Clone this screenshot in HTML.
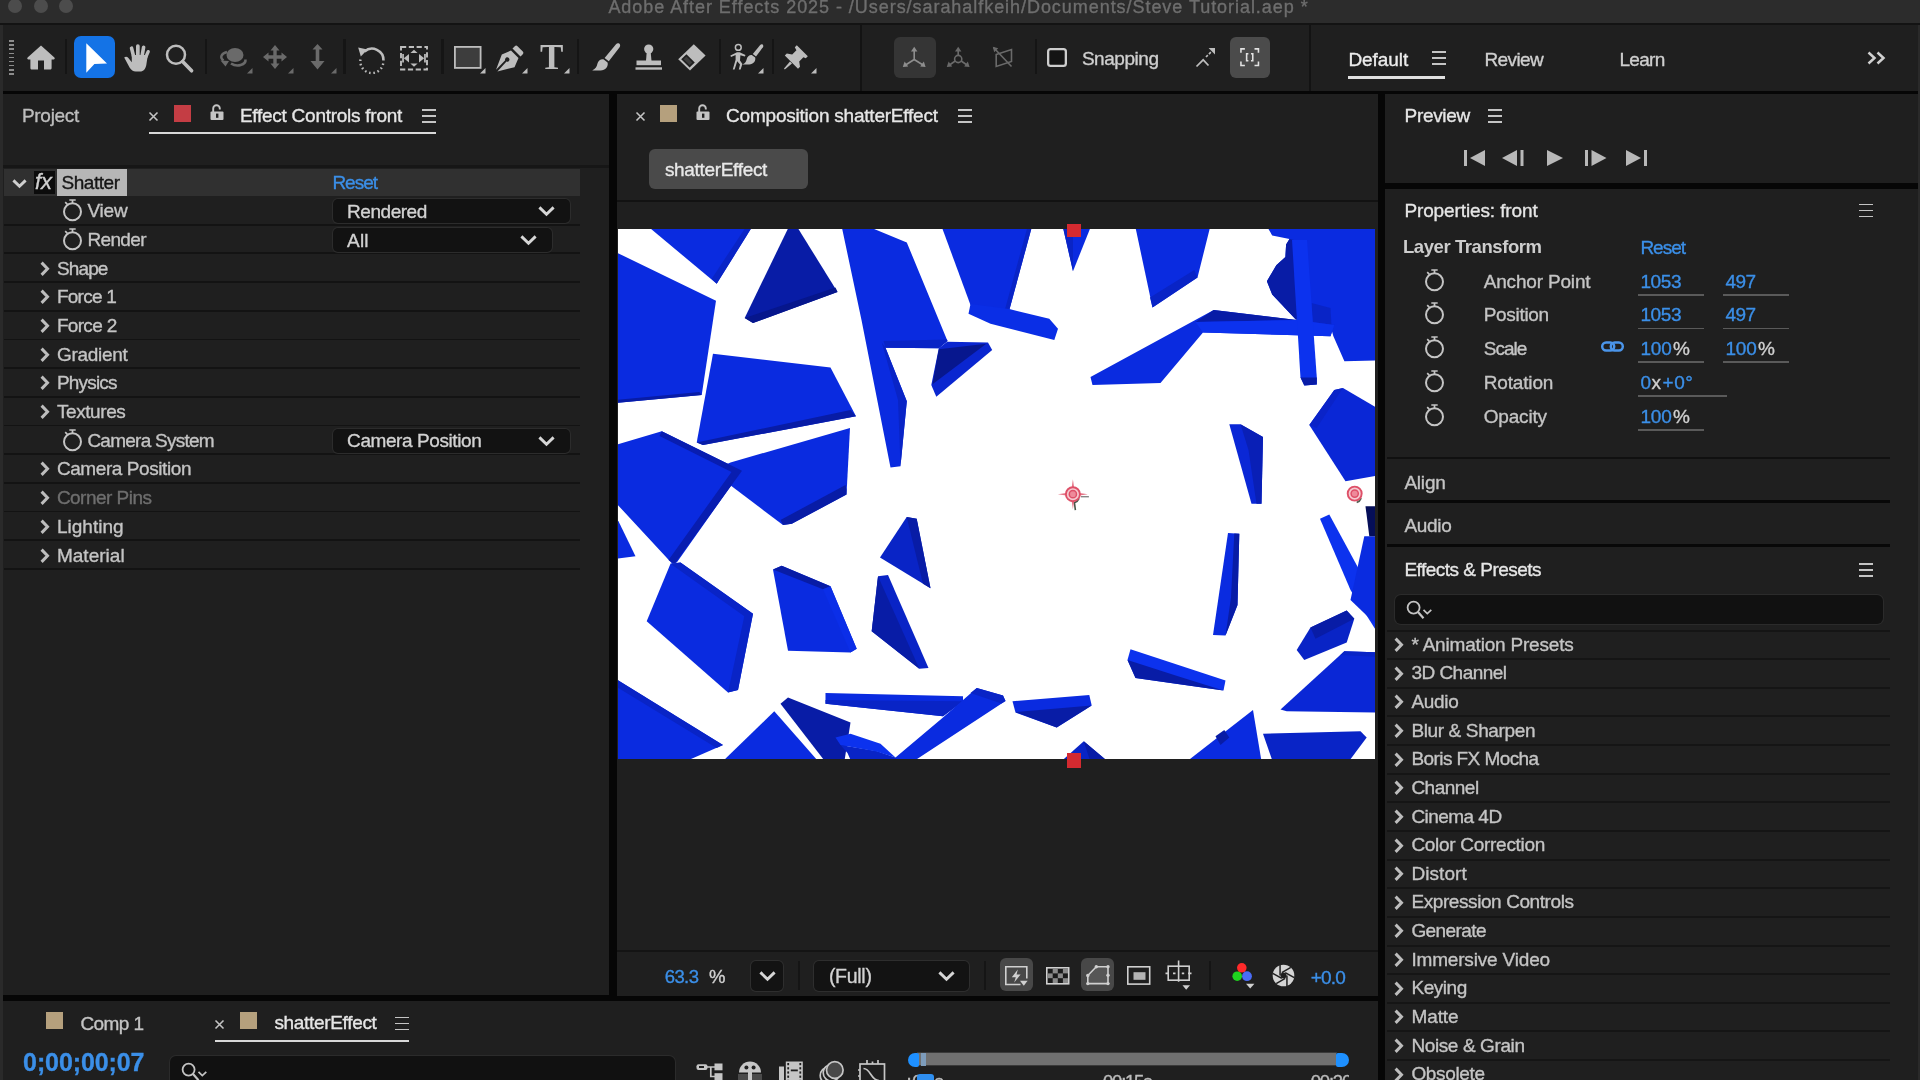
<!DOCTYPE html>
<html><head><meta charset="utf-8"><title>Adobe After Effects 2025</title>
<style>
html,body{margin:0;padding:0;background:#1f1f1f;}
body{width:1920px;height:1080px;overflow:hidden;position:relative;font-family:"Liberation Sans",sans-serif;}
#app{position:absolute;left:0;top:0;width:1920px;height:1080px;overflow:hidden;will-change:transform;}
#app div,#app span,#app svg{position:absolute;}
#app svg{overflow:visible;}
.t{white-space:pre;display:block;-webkit-text-stroke:0.35px currentColor;}
</style></head><body><div id="app">
<div style="left:0px;top:0px;width:1920px;height:1080px;background:#060606;"></div>
<div style="left:0px;top:0px;width:1920px;height:22.6px;background:#2c2c2c;"></div>
<div style="left:0px;top:22.6px;width:1920px;height:2.6px;background:#131313;"></div>
<div style="left:8px;top:0px;width:14px;height:14px;background:#4c4c4c;border-radius:7px;top:-1px"></div>
<div style="left:34px;top:0px;width:14px;height:14px;background:#4c4c4c;border-radius:7px;top:-1px"></div>
<div style="left:59px;top:0px;width:14px;height:14px;background:#4c4c4c;border-radius:7px;top:-1px"></div>
<span class="t" id="t0" style="left:608.40px;top:-2.00px;font-size:18px;line-height:18px;color:#6e6e6e;font-weight:400;letter-spacing:0.951px;">Adobe After Effects 2025 - /Users/sarahalfkeih/Documents/Steve Tutorial.aep *</span>
<div style="left:0px;top:25px;width:1920px;height:65.5px;background:#1f1f1f;"></div>
<div style="left:0px;top:25px;width:2.5px;height:1055px;background:#2a2a2a;"></div>
<div style="left:1918px;top:25px;width:2px;height:1055px;background:#2a2a2a;"></div>
<div style="left:3px;top:94px;width:606px;height:901.2px;background:#1f1f1f;"></div>
<div style="left:616.5px;top:94px;width:761.3px;height:901.8px;background:#1f1f1f;"></div>
<div style="left:1385px;top:94px;width:533px;height:88.5px;background:#1f1f1f;"></div>
<div style="left:1385px;top:189px;width:533px;height:891px;background:#1f1f1f;"></div>
<div style="left:3px;top:1001.3px;width:1374.8px;height:80px;background:#1f1f1f;"></div>
<span class="t" id="t1" style="left:21.90px;top:106.10px;font-size:19px;line-height:19px;color:#bdbdbd;font-weight:400;letter-spacing:-0.277px;">Project</span>
<svg style="left:149px;top:111.8px;" width="9" height="9" viewBox="0 0 9 9"><path d="M0.5 0.5L8.5 8.5M8.5 0.5L0.5 8.5" stroke="#c4c4c4" stroke-width="1.6" fill="none"/></svg>
<div style="left:173.5px;top:105px;width:17.5px;height:16.5px;background:#c43d44;"></div>
<svg style="left:210px;top:104.3px;" width="14" height="16" viewBox="0 0 14 16"><path d="M3.2 8V4.6a3.3 3.3 0 0 1 6.6 0V5.4" stroke="#c4c4c4" stroke-width="1.9" fill="none"/><rect x="0.5" y="7.4" width="13" height="8.6" rx="1" fill="#c4c4c4"/><rect x="6" y="9.6" width="2.4" height="4.2" fill="#1f1f1f"/></svg>
<span class="t" id="t2" style="left:239.90px;top:106.10px;font-size:19px;line-height:19px;color:#e6e6e6;font-weight:400;letter-spacing:-0.256px;">Effect Controls front</span>
<div style="left:422px;top:109.25px;width:14px;height:1.5px;background:#c4c4c4;"></div>
<div style="left:422px;top:115.25px;width:14px;height:1.5px;background:#c4c4c4;"></div>
<div style="left:422px;top:121.25px;width:14px;height:1.5px;background:#c4c4c4;"></div>
<div style="left:149px;top:131.7px;width:287px;height:2px;background:#d8d8d8;"></div>
<div style="left:3px;top:165.3px;width:606px;height:2.4px;background:#161616;"></div>
<div style="left:4px;top:168.6px;width:575.5px;height:27.490000000000002px;background:#303030;"></div>
<div style="left:4px;top:223.78px;width:576px;height:1.8px;background:#131313;"></div>
<div style="left:4px;top:252.47px;width:576px;height:1.8px;background:#131313;"></div>
<div style="left:4px;top:281.15999999999997px;width:576px;height:1.8px;background:#131313;"></div>
<div style="left:4px;top:309.85px;width:576px;height:1.8px;background:#131313;"></div>
<div style="left:4px;top:338.53999999999996px;width:576px;height:1.8px;background:#131313;"></div>
<div style="left:4px;top:367.23px;width:576px;height:1.8px;background:#131313;"></div>
<div style="left:4px;top:395.91999999999996px;width:576px;height:1.8px;background:#131313;"></div>
<div style="left:4px;top:424.61px;width:576px;height:1.8px;background:#131313;"></div>
<div style="left:4px;top:453.3px;width:576px;height:1.8px;background:#131313;"></div>
<div style="left:4px;top:481.99px;width:576px;height:1.8px;background:#131313;"></div>
<div style="left:4px;top:510.67999999999995px;width:576px;height:1.8px;background:#131313;"></div>
<div style="left:4px;top:539.37px;width:576px;height:1.8px;background:#131313;"></div>
<div style="left:4px;top:568.0600000000001px;width:576px;height:1.8px;background:#131313;"></div>
<svg style="left:12.0px;top:178.5px;" width="15" height="9" viewBox="0 0 15 9"><path d="M1.4 1.4L7.5 7.2L13.6 1.4" stroke="#cfcfcf" stroke-width="2.9" fill="none"/></svg>
<div style="left:34px;top:170.5px;width:20.5px;height:23.5px;background:#0c0c0c;"></div>
<span class="t" id="t3" style="left:34.90px;top:171.40px;font-size:22px;line-height:22px;color:#d0d0d0;font-weight:400;letter-spacing:0.042px;font-style:italic;">fx</span>
<div style="left:57px;top:168.6px;width:70px;height:27.490000000000002px;background:#b6b6b6;"></div>
<span class="t" id="t4" style="left:61.40px;top:172.80px;font-size:19px;line-height:19px;color:#161616;font-weight:400;letter-spacing:-0.438px;">Shatter</span>
<span class="t" id="t5" style="left:332.40px;top:172.80px;font-size:19px;line-height:19px;color:#3b8fe8;font-weight:400;letter-spacing:-0.988px;">Reset</span>
<svg style="left:62.5px;top:199.135px;" width="19" height="22" viewBox="0 0 19 22"><circle cx="9.5" cy="12.7" r="8.5" stroke="#c4c4c4" stroke-width="2" fill="none"/><path d="M6.3 1H12.7M9.5 1V4M2.2 3.2L4.4 5.4" stroke="#c4c4c4" stroke-width="1.7" fill="none"/></svg>
<span class="t" id="t6" style="left:87.40px;top:201.23px;font-size:19px;line-height:19px;color:#c4c4c4;font-weight:400;letter-spacing:-0.161px;">View</span>
<div style="left:333px;top:199.035px;width:236.5px;height:24px;background:#121212;border-radius:5px;box-shadow:0 0 0 1px #2c2c2c;"></div>
<span class="t" id="t7" style="left:347.10px;top:201.84px;font-size:19px;line-height:19px;color:#d2d2d2;font-weight:400;letter-spacing:-0.469px;">Rendered</span>
<svg style="left:538.3px;top:206.035px;" width="17" height="10" viewBox="0 0 17 10"><path d="M1.4 1.4L8.5 8.2L15.6 1.4" stroke="#d6d6d6" stroke-width="2.9" fill="none"/></svg>
<svg style="left:62.5px;top:227.825px;" width="19" height="22" viewBox="0 0 19 22"><circle cx="9.5" cy="12.7" r="8.5" stroke="#c4c4c4" stroke-width="2" fill="none"/><path d="M6.3 1H12.7M9.5 1V4M2.2 3.2L4.4 5.4" stroke="#c4c4c4" stroke-width="1.7" fill="none"/></svg>
<span class="t" id="t8" style="left:87.40px;top:229.92px;font-size:19px;line-height:19px;color:#c4c4c4;font-weight:400;letter-spacing:-0.638px;">Render</span>
<div style="left:333px;top:227.725px;width:218.5px;height:24px;background:#121212;border-radius:5px;box-shadow:0 0 0 1px #2c2c2c;"></div>
<span class="t" id="t9" style="left:347.10px;top:230.53px;font-size:19px;line-height:19px;color:#d2d2d2;font-weight:400;letter-spacing:0.191px;">All</span>
<svg style="left:520.3px;top:234.725px;" width="17" height="10" viewBox="0 0 17 10"><path d="M1.4 1.4L8.5 8.2L15.6 1.4" stroke="#d6d6d6" stroke-width="2.9" fill="none"/></svg>
<svg style="left:40px;top:260.665px;" width="9.5" height="15.5" viewBox="0 0 9.5 15.5"><path d="M1.6 1.6L7.5 7.75L1.6 13.9" stroke="#bdbdbd" stroke-width="3" fill="none" stroke-linejoin="miter"/></svg>
<span class="t" id="t10" style="left:56.90px;top:258.62px;font-size:19px;line-height:19px;color:#c4c4c4;font-weight:400;letter-spacing:-0.848px;">Shape</span>
<svg style="left:40px;top:289.355px;" width="9.5" height="15.5" viewBox="0 0 9.5 15.5"><path d="M1.6 1.6L7.5 7.75L1.6 13.9" stroke="#bdbdbd" stroke-width="3" fill="none" stroke-linejoin="miter"/></svg>
<span class="t" id="t11" style="left:56.90px;top:287.31px;font-size:19px;line-height:19px;color:#c4c4c4;font-weight:400;letter-spacing:-0.746px;">Force 1</span>
<svg style="left:40px;top:318.0450000000001px;" width="9.5" height="15.5" viewBox="0 0 9.5 15.5"><path d="M1.6 1.6L7.5 7.75L1.6 13.9" stroke="#bdbdbd" stroke-width="3" fill="none" stroke-linejoin="miter"/></svg>
<span class="t" id="t12" style="left:56.90px;top:316.00px;font-size:19px;line-height:19px;color:#c4c4c4;font-weight:400;letter-spacing:-0.674px;">Force 2</span>
<svg style="left:40px;top:346.735px;" width="9.5" height="15.5" viewBox="0 0 9.5 15.5"><path d="M1.6 1.6L7.5 7.75L1.6 13.9" stroke="#bdbdbd" stroke-width="3" fill="none" stroke-linejoin="miter"/></svg>
<span class="t" id="t13" style="left:56.90px;top:344.69px;font-size:19px;line-height:19px;color:#c4c4c4;font-weight:400;letter-spacing:-0.272px;">Gradient</span>
<svg style="left:40px;top:375.42500000000007px;" width="9.5" height="15.5" viewBox="0 0 9.5 15.5"><path d="M1.6 1.6L7.5 7.75L1.6 13.9" stroke="#bdbdbd" stroke-width="3" fill="none" stroke-linejoin="miter"/></svg>
<span class="t" id="t14" style="left:56.90px;top:373.38px;font-size:19px;line-height:19px;color:#c4c4c4;font-weight:400;letter-spacing:-0.796px;">Physics</span>
<svg style="left:40px;top:404.115px;" width="9.5" height="15.5" viewBox="0 0 9.5 15.5"><path d="M1.6 1.6L7.5 7.75L1.6 13.9" stroke="#bdbdbd" stroke-width="3" fill="none" stroke-linejoin="miter"/></svg>
<span class="t" id="t15" style="left:56.90px;top:402.06px;font-size:19px;line-height:19px;color:#c4c4c4;font-weight:400;letter-spacing:-0.414px;">Textures</span>
<svg style="left:62.5px;top:428.65500000000003px;" width="19" height="22" viewBox="0 0 19 22"><circle cx="9.5" cy="12.7" r="8.5" stroke="#c4c4c4" stroke-width="2" fill="none"/><path d="M6.3 1H12.7M9.5 1V4M2.2 3.2L4.4 5.4" stroke="#c4c4c4" stroke-width="1.7" fill="none"/></svg>
<span class="t" id="t16" style="left:87.40px;top:430.76px;font-size:19px;line-height:19px;color:#c4c4c4;font-weight:400;letter-spacing:-0.746px;">Camera System</span>
<div style="left:333px;top:428.55500000000006px;width:236.5px;height:24px;background:#121212;border-radius:5px;box-shadow:0 0 0 1px #2c2c2c;"></div>
<span class="t" id="t17" style="left:347.10px;top:431.36px;font-size:19px;line-height:19px;color:#d2d2d2;font-weight:400;letter-spacing:-0.417px;">Camera Position</span>
<svg style="left:538.3px;top:435.55500000000006px;" width="17" height="10" viewBox="0 0 17 10"><path d="M1.4 1.4L8.5 8.2L15.6 1.4" stroke="#d6d6d6" stroke-width="2.9" fill="none"/></svg>
<svg style="left:40px;top:461.49500000000006px;" width="9.5" height="15.5" viewBox="0 0 9.5 15.5"><path d="M1.6 1.6L7.5 7.75L1.6 13.9" stroke="#bdbdbd" stroke-width="3" fill="none" stroke-linejoin="miter"/></svg>
<span class="t" id="t18" style="left:56.90px;top:459.45px;font-size:19px;line-height:19px;color:#c4c4c4;font-weight:400;letter-spacing:-0.417px;">Camera Position</span>
<svg style="left:40px;top:490.18500000000006px;" width="9.5" height="15.5" viewBox="0 0 9.5 15.5"><path d="M1.6 1.6L7.5 7.75L1.6 13.9" stroke="#bdbdbd" stroke-width="3" fill="none" stroke-linejoin="miter"/></svg>
<span class="t" id="t19" style="left:56.90px;top:488.14px;font-size:19px;line-height:19px;color:#6e6e6e;font-weight:400;letter-spacing:-0.529px;">Corner Pins</span>
<svg style="left:40px;top:518.875px;" width="9.5" height="15.5" viewBox="0 0 9.5 15.5"><path d="M1.6 1.6L7.5 7.75L1.6 13.9" stroke="#bdbdbd" stroke-width="3" fill="none" stroke-linejoin="miter"/></svg>
<span class="t" id="t20" style="left:56.90px;top:516.83px;font-size:19px;line-height:19px;color:#c4c4c4;font-weight:400;letter-spacing:0.017px;">Lighting</span>
<svg style="left:40px;top:547.565px;" width="9.5" height="15.5" viewBox="0 0 9.5 15.5"><path d="M1.6 1.6L7.5 7.75L1.6 13.9" stroke="#bdbdbd" stroke-width="3" fill="none" stroke-linejoin="miter"/></svg>
<span class="t" id="t21" style="left:56.90px;top:545.52px;font-size:19px;line-height:19px;color:#c4c4c4;font-weight:400;letter-spacing:0.027px;">Material</span>
<div style="left:8.5px;top:40.2px;width:5.2px;height:1.7px;background:#8c8c8c;"></div>
<div style="left:8.5px;top:44.300000000000004px;width:5.2px;height:1.7px;background:#8c8c8c;"></div>
<div style="left:8.5px;top:48.400000000000006px;width:5.2px;height:1.7px;background:#8c8c8c;"></div>
<div style="left:8.5px;top:52.5px;width:5.2px;height:1.7px;background:#8c8c8c;"></div>
<div style="left:8.5px;top:56.6px;width:5.2px;height:1.7px;background:#8c8c8c;"></div>
<div style="left:8.5px;top:60.7px;width:5.2px;height:1.7px;background:#8c8c8c;"></div>
<div style="left:8.5px;top:64.8px;width:5.2px;height:1.7px;background:#8c8c8c;"></div>
<div style="left:8.5px;top:68.9px;width:5.2px;height:1.7px;background:#8c8c8c;"></div>
<div style="left:8.5px;top:73.0px;width:5.2px;height:1.7px;background:#8c8c8c;"></div>
<svg style="left:26.5px;top:44.5px;" width="28" height="25" viewBox="0 0 28 25"><path d="M14 0.6L27.4 12.6c.8.8.2 1.9-.8 1.9H24.6V23c0 1-.7 1.6-1.6 1.6H17V15.5H11V24.6H5c-.9 0-1.6-.6-1.6-1.6V14.5H1.4c-1 0-1.6-1.1-.8-1.9Z" fill="#bdbdbd"/></svg>
<div style="left:65.10000000000001px;top:39px;width:2.2px;height:35px;background:#151515;"></div>
<div style="left:74px;top:36.3px;width:41px;height:41.5px;background:#1473e6;border-radius:7px;"></div>
<svg style="left:74px;top:36.3px;" width="41" height="41.5" viewBox="0 0 41 41.5"><path d="M12.3 7.2L33 27.4L20.4 28L12.3 36.8Z" fill="#ffffff"/></svg>
<svg style="left:122.5px;top:43.5px;" width="28" height="28" viewBox="0 0 28 28"><g fill="#bdbdbd"><rect x="8.2" y="2.2" width="3.6" height="15" rx="1.8" transform="rotate(-14 10 10)"/><rect x="13" y="0.2" width="3.7" height="16" rx="1.8"/><rect x="17.8" y="1.4" width="3.6" height="15" rx="1.8" transform="rotate(10 19.6 9)"/><rect x="22" y="5.6" width="3.4" height="12" rx="1.7" transform="rotate(24 23.6 11)"/><path d="M1.2 13.6c1.3-1.4 3-1 4.2.4l3.400 4.200V11h16l-1.500 10c-.6 3.600-2.800 6.600-6.200 6.600h-4.400c-2.600 0-4.400-1.400-6-3.800Z"/></g></svg>
<svg style="left:163.5px;top:42.5px;" width="32" height="32" viewBox="0 0 32 32"><circle cx="12" cy="11.8" r="9" stroke="#bdbdbd" stroke-width="2.5" fill="none"/><path d="M18.6 18.6L27.6 27.8" stroke="#bdbdbd" stroke-width="3.6" stroke-linecap="round"/></svg>
<div style="left:204.5px;top:39px;width:2.2px;height:35px;background:#151515;"></div>
<svg style="left:218px;top:46px;" width="32" height="24" viewBox="0 0 32 24"><ellipse cx="17" cy="9" rx="8.5" ry="7" fill="#6a6a6a"/><path d="M9 6C3 7.5 1.500 11.500 5.500 14.500" stroke="#6a6a6a" stroke-width="2.4" fill="none"/><path d="M2.500 14.500L11 15L7.500 20.500Z" fill="#6a6a6a"/><path d="M13 17.500C19 21.500 28 19 27.500 13.500" stroke="#6a6a6a" stroke-width="2.600" fill="none"/></svg>
<svg style="left:247.0px;top:68.0px;" width="5.5" height="5.5" viewBox="0 0 5.5 5.5"><path d="M5.5 0V5.5H0Z" fill="#6a6a6a"/></svg>
<svg style="left:263px;top:45.4px;" width="24" height="24" viewBox="0 0 24 24"><g fill="#6a6a6a"><path d="M12 0L16.500 5.500H13.700V10.300H18.500V7.500L24 12L18.500 16.500V13.700H13.700V18.500H16.500L12 24L7.500 18.500H10.300V13.700H5.500V16.500L0 12L5.500 7.500V10.300H10.300V5.500H7.500Z"/></g></svg>
<svg style="left:288.0px;top:68.0px;" width="5.5" height="5.5" viewBox="0 0 5.5 5.5"><path d="M5.5 0V5.5H0Z" fill="#6a6a6a"/></svg>
<svg style="left:310px;top:44.3px;" width="15" height="25.5" viewBox="0 0 15 25.5"><g fill="#6a6a6a"><path d="M7.500 0L12.500 5.500H9.300V17H14.500L7.500 25.500L0.500 17H5.700V5.500H2.500Z"/></g></svg>
<svg style="left:330.5px;top:68.0px;" width="5.5" height="5.5" viewBox="0 0 5.5 5.5"><path d="M5.5 0V5.5H0Z" fill="#6a6a6a"/></svg>
<div style="left:342.9px;top:39px;width:3px;height:35px;background:#151515;"></div>
<svg style="left:357px;top:44px;" width="29" height="29" viewBox="0 0 29 29"><path d="M7.500 7.500A11.500 11.500 0 0 1 26.500 16.500" stroke="#bdbdbd" stroke-width="2.600" fill="none"/><path d="M1.200 3.500L10.500 5.500L3.800 12.500Z" fill="#bdbdbd"/><path d="M26.200 19.500A11.500 11.500 0 0 1 3.500 15.500" stroke="#bdbdbd" stroke-width="2.400" fill="none" stroke-dasharray="1.6 2.700"/></svg>
<svg style="left:400px;top:45.5px;" width="28" height="24.5" viewBox="0 0 28 24.5"><rect x="1" y="1" width="26" height="22.500" stroke="#bdbdbd" stroke-width="1.900" fill="none" stroke-dasharray="5.200 2.600"/><g fill="#bdbdbd"><path d="M14 3.800L17.600 7H10.400Z"/><path d="M14 20.700L17.600 17.500H10.400Z"/><path d="M3.800 12.200L9 8V16.500Z"/><rect x="2.200" y="8" width="1.700" height="8.500"/><path d="M24.200 12.200L19 8V16.500Z"/><rect x="24.100" y="8" width="1.700" height="8.500"/></g></svg>
<div style="left:441.4px;top:39px;width:2.2px;height:35px;background:#151515;"></div>
<svg style="left:454px;top:46px;" width="27.5" height="22.8" viewBox="0 0 27.5 22.8"><rect x="0.900" y="0.900" width="25.700" height="21" stroke="#bdbdbd" stroke-width="1.800" fill="#3d3d3d"/></svg>
<svg style="left:480.0px;top:68.0px;" width="5.5" height="5.5" viewBox="0 0 5.5 5.5"><path d="M5.5 0V5.5H0Z" fill="#bdbdbd"/></svg>
<svg style="left:494.5px;top:43.5px;" width="30" height="28" viewBox="0 0 30 28"><g fill="#bdbdbd"><path d="M17.500 4.500L25.500 12.500L27.800 10.200C28.600 9.400 28.600 8.300 27.800 7.500L22.500 2.200C21.700 1.400 20.600 1.400 19.800 2.200Z"/><path d="M16 6.500L23.500 14L19.500 23.200L2.400 27.400L11.500 17.600A2.200 2.200 0 1 0 10.200 16.300L1 25.800L6.800 10.500Z"/></g></svg>
<svg style="left:522.0px;top:68.0px;" width="5.5" height="5.5" viewBox="0 0 5.5 5.5"><path d="M5.5 0V5.5H0Z" fill="#bdbdbd"/></svg>
<span class="t" id="t22" style="left:540.00px;top:39.90px;font-size:35px;line-height:35px;color:#bdbdbd;font-weight:700;letter-spacing:0.000px;font-family:'Liberation Serif',serif;-webkit-text-stroke:0;">T</span>
<svg style="left:564.0px;top:68.0px;" width="5.5" height="5.5" viewBox="0 0 5.5 5.5"><path d="M5.5 0V5.5H0Z" fill="#bdbdbd"/></svg>
<div style="left:576.9px;top:39px;width:2.2px;height:35px;background:#151515;"></div>
<svg style="left:590.5px;top:43.2px;" width="30" height="28" viewBox="0 0 30 28"><g fill="#bdbdbd"><path d="M28.200 0.600C29.400 1.500 29.400 3 28.600 4.200L17.800 18.200L13.600 15L25 1.200C25.900 0.100 27.200 -.1 28.200 .6Z"/><path d="M12.400 16.200L16.600 19.400C17.600 23.200 14.500 27.400 9.500 27.400H1.200C4.800 25.800 5.800 23.500 6.400 20.800C7 18 9.500 15.800 12.400 16.200Z"/></g></svg>
<svg style="left:635px;top:44px;" width="27.5" height="27" viewBox="0 0 27.5 27"><g fill="#bdbdbd"><circle cx="13.700" cy="5" r="4.600"/><path d="M11.700 8H15.700L16.500 17H11Z"/><path d="M1.500 16.500H26V21.200H1.500Z"/><rect x="0.500" y="23.300" width="26.500" height="2.400"/></g></svg>
<svg style="left:676.5px;top:42.8px;" width="30" height="29" viewBox="0 0 30 29"><g><path d="M16.800 1.200L28.600 12.500L13 27.600L1.200 16.300Z" fill="#bdbdbd"/><path d="M4.200 16.300L9.400 11.300L17.800 19.400L12.600 24.400Z" fill="#1f1f1f"/><path d="M6.600 16.300L9.400 13.600L15.400 19.400L12.600 22.100Z" fill="#3a3a3a"/></g></svg>
<div style="left:718.6999999999999px;top:39px;width:2.2px;height:35px;background:#151515;"></div>
<svg style="left:728.5px;top:43.5px;" width="35" height="27" viewBox="0 0 35 27"><g fill="#bdbdbd"><circle cx="9.300" cy="3.400" r="2.900" fill="none" stroke="#bdbdbd" stroke-width="1.500"/><path d="M1.400 11.500L8 8.300H10.600L16.500 11L15.800 12.600L11.400 11.200L11 16.500L13.400 20L11.600 25.500H9.800L11 20.500L8.200 17.200L5.600 25.600H3.800L6.600 15.800V10.900L2 13Z"/><path d="M33.600 0.500C34.500 1.200 34.500 2.300 33.900 3.200L27 12.500L23.800 10L31.200 1C31.900 .2 32.800 0 33.600 .5Z"/><path d="M22.800 11L26.200 13.600C27 17 24.400 20.400 20.200 20.400H13.500C16.300 19.200 17.200 17.400 17.700 15.200C18.200 12.700 20.400 10.700 22.800 11Z"/></g></svg>
<svg style="left:757.5px;top:68.0px;" width="5.5" height="5.5" viewBox="0 0 5.5 5.5"><path d="M5.5 0V5.5H0Z" fill="#bdbdbd"/></svg>
<div style="left:771.9px;top:39px;width:2.2px;height:35px;background:#151515;"></div>
<svg style="left:782.5px;top:43.5px;" width="26" height="26" viewBox="0 0 26 26"><g fill="#bdbdbd"><path d="M13.800 1.200L24.800 12.200L22.800 14.200L20.400 13.200L16.200 17.400L17 22.800L15 24.800L1.800 11.600L3.800 9.600L9.200 10.400L13.400 6.200L11.800 3.200Z" transform="rotate(0)"/><path d="M7 17.500L9 19.500L1.800 25.400L1 24.600Z"/></g></svg>
<svg style="left:811.0px;top:68.0px;" width="5.5" height="5.5" viewBox="0 0 5.5 5.5"><path d="M5.5 0V5.5H0Z" fill="#bdbdbd"/></svg>
<div style="left:859.8px;top:25px;width:2.6px;height:65.5px;background:#131313;"></div>
<div style="left:1308.8px;top:25px;width:2.6px;height:65.5px;background:#131313;"></div>
<div style="left:894.4px;top:37px;width:41.5px;height:41px;background:#353535;border-radius:6px;"></div>
<svg style="left:901px;top:45px;" width="27" height="25" viewBox="0 0 27 25"><g stroke="#8e8e8e" stroke-width="1.600" fill="none"><path d="M13.200 14.500V5M13.200 14.500L4.500 20M13.200 14.500L22 20"/></g><g fill="#8e8e8e"><path d="M13.200 1.800L16.400 6.600H10Z"/><path d="M1.800 22L3.600 16.500L7.200 21.600Z"/><path d="M24.600 22L22.800 16.500L19.200 21.600Z"/></g></svg>
<svg style="left:945px;top:45px;" width="27" height="25" viewBox="0 0 27 25"><g stroke="#6a6a6a" stroke-width="1.600" fill="none"><circle cx="13.200" cy="14" r="3.600"/><path d="M13.200 10.400V5M10.200 16L4.500 20M16.200 16L22 20"/></g><g fill="#6a6a6a"><path d="M13.200 1.800L16.400 6.600H10Z"/><path d="M1.800 22L3.600 16.500L7.200 21.600Z"/><path d="M24.600 22L22.800 16.500L19.200 21.600Z"/></g></svg>
<svg style="left:991.5px;top:45.5px;" width="23" height="23" viewBox="0 0 23 23"><g stroke="#6a6a6a" stroke-width="1.600" fill="none"><path d="M4.200 8.500L19.500 3.500V15.500L4.200 20.500Z"/><path d="M1.500 1.500L19.500 20.500"/></g><path d="M0.800 0.800L6.200 2.200L2.200 6.200Z" fill="#6a6a6a"/></svg>
<div style="left:1034.9px;top:39px;width:2.2px;height:35px;background:#151515;"></div>
<div style="left:1047.2px;top:47.5px;width:19.6px;height:19.6px;background:#141414;border-radius:3.500px;box-shadow:inset 0 0 0 2.300px #cdcdcd;"></div>
<span class="t" id="t23" style="left:1081.90px;top:48.90px;font-size:19px;line-height:19px;color:#cfcfcf;font-weight:400;letter-spacing:-0.450px;">Snapping</span>
<svg style="left:1194.5px;top:47px;" width="21" height="21" viewBox="0 0 21 21"><g stroke="#bdbdbd" stroke-width="1.700" fill="none"><path d="M1.500 19.500L8.200 12.800L13.500 18.500"/><path d="M11 10L17 4" stroke-dasharray="2.600 1.600"/></g><path d="M20 1V7.400L13.600 1Z" fill="#bdbdbd"/></svg>
<div style="left:1229.5px;top:37px;width:40.5px;height:41px;background:#4b4b4b;border-radius:6px;"></div>
<svg style="left:1240.3px;top:48.3px;" width="19.4" height="18.4" viewBox="0 0 22 21"><g stroke="#e2e2e2" stroke-width="1.800" fill="none"><path d="M1 5.500V1H5.500M16.500 1H21V5.500M21 15.500V20H16.500M5.500 20H1V15.500"/><path d="M9.500 6.500H7.500V14.500H9.500M12.500 6.500H14.500V14.500H12.500"/></g></svg>
<span class="t" id="t24" style="left:1348.40px;top:50.10px;font-size:19px;line-height:19px;color:#ececec;font-weight:400;letter-spacing:-0.072px;">Default</span>
<div style="left:1431.5px;top:51.45px;width:14px;height:1.5px;background:#c4c4c4;"></div>
<div style="left:1431.5px;top:57.45px;width:14px;height:1.5px;background:#c4c4c4;"></div>
<div style="left:1431.5px;top:63.45px;width:14px;height:1.5px;background:#c4c4c4;"></div>
<div style="left:1347.5px;top:76.1px;width:97.5px;height:2.6px;background:#e0e0e0;"></div>
<span class="t" id="t25" style="left:1484.40px;top:50.10px;font-size:19px;line-height:19px;color:#cfcfcf;font-weight:400;letter-spacing:-0.600px;">Review</span>
<span class="t" id="t26" style="left:1619.40px;top:50.10px;font-size:19px;line-height:19px;color:#cfcfcf;font-weight:400;letter-spacing:-0.679px;">Learn</span>
<svg style="left:1866.5px;top:50.8px;" width="19" height="14" viewBox="0 0 19 14"><path d="M1.500 1.500L7.500 7L1.500 12.500M10.500 1.500L16.500 7L10.500 12.500" stroke="#d0d0d0" stroke-width="2.500" fill="none"/></svg>
<svg style="left:636px;top:111.8px;" width="9" height="9" viewBox="0 0 9 9"><path d="M0.5 0.5L8.5 8.5M8.5 0.5L0.5 8.5" stroke="#c4c4c4" stroke-width="1.6" fill="none"/></svg>
<div style="left:660px;top:105px;width:17px;height:16.5px;background:#b5a07d;"></div>
<svg style="left:696px;top:104.3px;" width="14" height="16" viewBox="0 0 14 16"><path d="M3.2 8V4.6a3.3 3.3 0 0 1 6.6 0V5.4" stroke="#c4c4c4" stroke-width="1.9" fill="none"/><rect x="0.5" y="7.4" width="13" height="8.6" rx="1" fill="#c4c4c4"/><rect x="6" y="9.6" width="2.4" height="4.2" fill="#1f1f1f"/></svg>
<span class="t" id="t27" style="left:726.10px;top:106.10px;font-size:19px;line-height:19px;color:#e6e6e6;font-weight:400;letter-spacing:-0.221px;">Composition shatterEffect</span>
<div style="left:957.5px;top:109.25px;width:14px;height:1.5px;background:#c4c4c4;"></div>
<div style="left:957.5px;top:115.25px;width:14px;height:1.5px;background:#c4c4c4;"></div>
<div style="left:957.5px;top:121.25px;width:14px;height:1.5px;background:#c4c4c4;"></div>
<div style="left:648.7px;top:148.7px;width:159px;height:40px;background:#4a4a4a;border-radius:6px;"></div>
<span class="t" id="t28" style="left:664.90px;top:160.30px;font-size:19px;line-height:19px;color:#e8e8e8;font-weight:400;letter-spacing:-0.318px;">shatterEffect</span>
<div style="left:616.5px;top:200px;width:761px;height:2.2px;background:#121212;"></div>
<svg style="left:617.5px;top:229px;overflow:hidden" width="757.8" height="530" viewBox="617.5 229 757.8 530"><rect x="617.5" y="229" width="757.8" height="530" fill="#ffffff"/><polygon points="648.8,227.5 751.2,227.5 716.2,283.8" fill="#0a2be0"/>
<polygon points="751.2,227.5 716.2,283.8 711.2,278.8 745.0,227.5" fill="#0924c6"/>
<polygon points="615.0,252.0 715.5,300.8 701.2,395.0 615.0,403.0" fill="#0a2be0"/>
<polygon points="701.2,395.0 615.0,403.0 615.0,400.0 698.8,392.0" fill="#081ca6"/>
<polygon points="788.0,227.5 797.0,227.5 837.0,292.0 752.5,323.0 744.2,318.0" fill="#081ca6"/>
<polygon points="837.0,292.0 752.5,323.0 744.2,318.0 835.0,287.5" fill="#06168c"/>
<polygon points="941.3,227.0 1031.3,227.0 1008.8,310.0 970.0,305.0" fill="#0a2be0"/>
<polygon points="1031.3,227.0 1008.8,310.0 1004.5,309.3 1027.0,227.0" fill="#0924c6"/>
<polygon points="968.0,313.8 970.0,304.0 1008.8,309.0 1048.8,318.8 1057.5,328.8 1053.8,340.0 990.0,323.8" fill="#0a2ee6"/>
<polygon points="841.3,227.0 868.8,227.0 906.3,242.5 947.0,341.0 938.3,348.3 885.0,347.8 906.3,401.3 900.0,466.3 890.0,467.5 861.0,320.0" fill="#0a2be0"/>
<polygon points="885.0,347.8 906.3,401.3 900.0,466.3 897.5,400.0 881.3,342.5" fill="#0924c6"/>
<polygon points="883.0,341.0 946.5,339.5 947.0,341.0 938.3,348.3 885.0,347.8" fill="#0924c6"/>
<polygon points="930.8,385.0 938.3,348.3 946.7,341.7 987.5,342.5 991.7,350.0 935.8,396.7" fill="#0a26d0"/>
<polygon points="938.3,349.2 985.8,343.7 932.0,384.2" fill="#07178e"/>
<polygon points="712.5,353.8 830.0,367.5 855.5,416.2 702.5,445.0 696.2,442.5" fill="#0a2be0"/>
<polygon points="855.5,416.2 702.5,445.0 696.2,442.5 850.0,410.0" fill="#081ca6"/>
<polygon points="849.5,428.0 846.0,494.5 791.3,523.8 782.5,525.0 711.0,471.0 730.0,462.5" fill="#0a2be0"/>
<polygon points="846.0,490.0 846.0,494.5 791.3,523.8 782.5,525.0 780.0,520.0 845.0,485.0" fill="#081ca6"/>
<polygon points="615.0,445.0 661.3,431.3 741.5,470.8 727.5,490.0 676.3,562.5 672.0,564.0 615.0,502.5" fill="#0a2be0"/>
<polygon points="661.3,431.3 741.5,470.8 674.0,564.0 668.0,560.0 731.0,472.0 659.0,436.0" fill="#081db0"/>
<polygon points="1062.5,227.5 1090.0,227.5 1072.5,271.2" fill="#0a2be0"/>
<polygon points="1062.5,227.5 1072.5,227.5 1072.5,271.2" fill="#0924c6"/>
<polygon points="1135.0,227.5 1209.5,227.5 1197.0,277.5 1152.0,307.5" fill="#0a2be0"/>
<polygon points="1197.0,277.5 1152.0,307.5 1149.5,297.5 1193.8,270.0" fill="#0924c6"/>
<polygon points="1266.8,227.0 1271.7,235.4 1289.0,238.9 1285.6,244.4 1284.9,257.0 1275.8,265.3 1266.4,281.3 1271.7,294.4 1295.3,319.4 1330.0,326.0 1332.8,336.0 1343.9,361.2 1380.0,360.4 1380.0,227.0" fill="#0a2be0"/>
<polygon points="1289.0,238.9 1285.6,244.4 1284.9,257.0 1275.8,265.3 1266.4,281.3 1271.7,294.4 1295.3,319.4 1300.0,320.0 1296.0,260.0 1293.0,240.0" fill="#081ca6"/>
<polygon points="1311.0,303.0 1330.0,308.0 1331.0,326.0 1312.0,323.6" fill="#0924c6"/>
<polygon points="1090.0,377.0 1213.2,310.0 1296.2,320.0 1333.8,325.0 1330.0,336.2 1202.5,332.5 1160.0,383.0 1092.0,385.0" fill="#0a2be0"/>
<polygon points="1213.2,310.0 1296.2,320.0 1195.0,322.0" fill="#081ca6"/>
<polygon points="1195.0,322.0 1296.2,320.0 1333.8,325.0 1330.0,336.2 1202.5,332.5" fill="#0c32ee"/>
<polygon points="1291.5,240.0 1306.5,240.0 1316.3,377.5 1316.3,384.5 1303.8,385.5 1300.0,377.5" fill="#0c32ee"/>
<polygon points="1316.3,377.5 1316.3,384.5 1303.8,385.5 1300.0,377.5" fill="#081ca6"/>
<polygon points="1308.8,425.0 1333.8,390.0 1342.5,388.0 1380.0,410.0 1380.0,475.0 1345.0,481.2" fill="#0a27d6"/>
<polygon points="1308.8,425.0 1333.8,390.0 1342.5,388.0 1316.2,428.0" fill="#0a23c8"/>
<polygon points="1228.8,424.3 1240.0,424.3 1262.5,437.0 1261.0,503.8 1251.0,503.8" fill="#0a27d6"/>
<polygon points="1240.0,424.3 1262.5,437.0 1261.0,503.8 1256.0,503.8 1248.0,450.0" fill="#091fb6"/>
<polygon points="615.0,515.0 635.0,556.2 615.0,558.8" fill="#0a2be0"/>
<polygon points="670.0,563.8 680.0,562.5 752.5,613.8 737.5,690.0 727.5,692.5 646.2,621.2" fill="#0a2be0"/>
<polygon points="670.0,563.8 680.0,562.5 752.5,613.8 737.5,690.0 727.5,692.5 743.8,616.2" fill="#0924c6"/>
<polygon points="772.5,569.5 781.2,565.8 830.0,586.2 856.2,648.8 850.0,652.5 787.5,650.8" fill="#0a2be0"/>
<polygon points="772.5,569.5 781.2,565.8 830.0,586.2 822.5,589.2" fill="#081ca6"/>
<polygon points="830.0,586.2 856.2,648.8 850.0,652.5 822.5,589.2" fill="#0b2ee8"/>
<polygon points="906.2,517.0 916.2,518.8 930.0,588.2 879.5,557.5" fill="#0924c6"/>
<polygon points="906.2,517.0 916.2,518.8 930.0,588.2 922.5,583.8" fill="#081ca6"/>
<polygon points="877.5,576.2 887.5,575.0 928.0,668.0 918.8,668.8 871.2,631.2" fill="#0924c6"/>
<polygon points="877.5,576.2 918.8,668.8 871.2,631.2" fill="#081ca6"/>
<polygon points="825.0,693.0 962.5,696.2 962.5,701.2 942.5,716.2 825.0,703.8" fill="#0a2be0"/>
<polygon points="825.0,700.0 962.5,701.2 942.5,716.2 825.0,703.8" fill="#0924c6"/>
<polygon points="976.3,688.0 1002.5,695.6 1005.0,701.0 912.0,762.0 889.0,762.0 895.0,757.5 942.5,717.5" fill="#0a2be0"/>
<polygon points="976.3,688.0 1002.5,695.6 1005.0,701.0 1001.0,703.5 970.0,693.0" fill="#0924c6"/>
<polygon points="780.0,703.8 787.5,697.5 850.0,722.5 843.8,762.0 825.0,762.0" fill="#081ca6"/>
<polygon points="840.0,745.0 876.0,751.0 895.0,757.5 898.0,762.0 851.0,762.0 847.0,753.0" fill="#0924c6"/>
<polygon points="835.0,737.5 850.0,733.8 880.0,743.8 895.0,757.5 876.0,751.5 840.0,745.0" fill="#0c32ee"/>
<polygon points="615.0,678.8 722.5,745.0 682.5,762.5 615.0,762.5" fill="#0a2be0"/>
<polygon points="615.0,678.8 722.5,745.0 716.2,748.0 615.0,686.2" fill="#0924c6"/>
<polygon points="773.8,711.2 818.8,762.5 721.0,762.5" fill="#0a2be0"/>
<polygon points="1012.0,701.2 1088.8,695.0 1091.2,705.5 1056.2,727.5 1015.0,712.5" fill="#0a2be0"/>
<polygon points="1015.0,712.0 1091.2,705.5 1056.2,727.5" fill="#081ca6"/>
<polygon points="1083.3,741.3 1108.0,762.0 1060.0,762.0" fill="#0924c6"/>
<polygon points="1083.3,741.3 1108.0,762.0 1090.0,762.0" fill="#081ca6"/>
<polygon points="1130.0,649.2 1225.0,680.5 1223.0,690.5 1135.0,678.0 1127.0,660.0" fill="#0c32ee"/>
<polygon points="1127.0,660.0 1177.5,676.2 1223.0,690.5 1135.0,678.0" fill="#081ca6"/>
<polygon points="1227.5,533.0 1238.8,533.8 1237.0,605.0 1225.0,635.5 1212.5,635.0" fill="#0a2be0"/>
<polygon points="1233.8,533.5 1238.8,533.8 1237.0,605.0 1225.0,635.5 1230.5,597.5" fill="#081ca6"/>
<polygon points="1319.5,518.8 1328.8,514.5 1357.5,567.5 1380.0,610.0 1380.0,637.5 1350.0,590.0" fill="#0c32ee"/>
<polygon points="1363.8,536.3 1380.0,536.3 1380.0,628.8 1350.0,600.0" fill="#0a2be0"/>
<polygon points="1365.0,506.3 1380.0,506.3 1380.0,536.3 1368.8,536.3" fill="#050e58"/>
<polygon points="1296.2,650.0 1310.0,627.5 1346.2,610.5 1353.8,618.8 1346.2,642.5 1303.8,660.0" fill="#0924c6"/>
<polygon points="1310.0,627.5 1346.2,610.5 1353.8,618.8 1315.0,638.8" fill="#081ca6"/>
<polygon points="1280.0,709.5 1343.8,651.2 1380.0,652.5 1380.0,712.5 1286.2,711.2" fill="#0a27d6"/>
<polygon points="1343.8,651.2 1380.0,652.5 1380.0,657.0 1340.0,655.0" fill="#0924c6"/>
<polygon points="1252.5,710.0 1261.2,762.5 1185.0,762.5" fill="#0a2be0"/>
<polygon points="1215.0,736.2 1223.8,730.0 1228.8,737.5 1220.0,745.0" fill="#081ca6"/>
<polygon points="1262.5,733.8 1360.0,731.2 1366.2,737.5 1347.5,762.5 1272.5,762.5" fill="#0924c6"/>
<g><path d="M1078.6000000000001 498.4A7.500 7.500 0 0 1 1073.9 502.7L1074.9 510.2" stroke="#2a3a2a" stroke-width="1.600" fill="none" opacity=".85"/><path d="M1080.4 496.7H1088.4" stroke="#555" stroke-width="1.400" opacity=".7"/><path d="M1057.4 494.2L1072.4 492.0L1087.4 494.2L1072.4 496.4Z" fill="#de5068" opacity=".8"/><path d="M1072.4 479.2L1074.6000000000001 494.2L1072.4 509.2L1070.2 494.2Z" fill="#de5068" opacity=".8"/><circle cx="1072.4" cy="494.2" r="7" stroke="#de5068" stroke-width="1.900" fill="#f6c9d0"/><circle cx="1072.4" cy="494.2" r="3.600" stroke="#de5068" stroke-width="1.500" fill="#ee8a9a"/></g>
<g><path d="M1360.7 498.1A7.800 7.800 0 0 1 1356.2 502.6" stroke="#2a3a2a" stroke-width="1.600" fill="none" opacity=".8"/><circle cx="1354.2" cy="493.6" r="7" stroke="#de5068" stroke-width="1.900" fill="#f6c9d0"/><circle cx="1354.2" cy="493.6" r="3.600" stroke="#de5068" stroke-width="1.500" fill="#ee8a9a"/></g></svg>
<div style="left:1067px;top:223.6px;width:13.6px;height:13px;background:#d42a30;"></div>
<div style="left:1067px;top:753.4px;width:13.6px;height:14.4px;background:#d42a30;"></div>
<div style="left:616.5px;top:949.5px;width:761px;height:2px;background:#141414;"></div>
<span class="t" id="t29" style="left:664.70px;top:968.15px;font-size:18.5px;line-height:18.5px;color:#3b8fe8;font-weight:400;letter-spacing:-0.579px;">63.3</span>
<span class="t" id="t30" style="left:708.90px;top:968.15px;font-size:18.5px;line-height:18.5px;color:#d0d0d0;font-weight:400;letter-spacing:0.238px;">%</span>
<div style="left:751px;top:961px;width:32px;height:29.5px;background:#131313;border-radius:5px;box-shadow:0 0 0 1px #2e2e2e;"></div>
<svg style="left:758.5px;top:970.5px;" width="17" height="10" viewBox="0 0 17 10"><path d="M1.4 1.4L8.5 8.2L15.6 1.4" stroke="#d6d6d6" stroke-width="2.9" fill="none"/></svg>
<div style="left:797.5px;top:961px;width:2px;height:29px;background:#151515;"></div>
<div style="left:814px;top:961px;width:154.5px;height:29.5px;background:#131313;border-radius:5px;box-shadow:0 0 0 1px #2e2e2e;"></div>
<span class="t" id="t31" style="left:828.90px;top:966.75px;font-size:19.5px;line-height:19.5px;color:#d2d2d2;font-weight:400;letter-spacing:-0.285px;">(Full)</span>
<svg style="left:937.5px;top:970.5px;" width="17" height="10" viewBox="0 0 17 10"><path d="M1.4 1.4L8.5 8.2L15.6 1.4" stroke="#d6d6d6" stroke-width="2.9" fill="none"/></svg>
<div style="left:984px;top:961px;width:2px;height:29px;background:#151515;"></div>
<div style="left:1208.5px;top:961px;width:2px;height:29px;background:#151515;"></div>
<span class="t" id="t32" style="left:1310.80px;top:968.30px;font-size:19px;line-height:19px;color:#3b8fe8;font-weight:400;letter-spacing:-0.829px;">+0.0</span>
<div style="left:1000.3px;top:958.3px;width:32.5px;height:32.7px;background:#484848;border-radius:6px;"></div>
<svg style="left:1005px;top:965.5px;" width="23" height="20.5" viewBox="0 0 23 20.5"><path d="M15.500 18.500H0.800V0.800H21.800V12.500" stroke="#d0d0d0" stroke-width="1.600" fill="none"/><path d="M12.800 3.500L6.800 11.200H10.800L9.200 16.500L15.600 8.400H11.600Z" fill="#d0d0d0"/><path d="M15 14.800H22.600L18.800 19.800Z" fill="#d0d0d0"/></svg>
<svg style="left:1045.5px;top:967px;" width="23.5" height="17.6" viewBox="0 0 23.5 17.6"><rect x="0.800" y="0.800" width="21.900" height="16" stroke="#d0d0d0" stroke-width="1.600" fill="#1a1a1a"/><rect x="1.60" y="6.40" width="5.100" height="4.800" fill="#8a8a8a"/><rect x="6.70" y="1.60" width="5.100" height="4.800" fill="#8a8a8a"/><rect x="6.70" y="11.20" width="5.100" height="4.800" fill="#8a8a8a"/><rect x="11.80" y="6.40" width="5.100" height="4.800" fill="#8a8a8a"/><rect x="16.90" y="1.60" width="5.100" height="4.800" fill="#8a8a8a"/><rect x="16.90" y="11.20" width="5.100" height="4.800" fill="#8a8a8a"/></svg>
<div style="left:1081px;top:958.3px;width:33.3px;height:32.7px;background:#484848;border-radius:6px;"></div>
<svg style="left:1085px;top:963.5px;" width="26" height="22" viewBox="0 0 26 22"><path d="M2.800 11.500L11.300 2.800H23V19.600H2.800Z" stroke="#d0d0d0" stroke-width="1.600" fill="#565656"/><circle cx="2.8" cy="11.5" r="1.700" fill="#d0d0d0"/><circle cx="11.3" cy="2.8" r="1.700" fill="#d0d0d0"/><circle cx="23" cy="2.8" r="1.700" fill="#d0d0d0"/><circle cx="23" cy="11.2" r="1.700" fill="#d0d0d0"/><circle cx="23" cy="19.6" r="1.700" fill="#d0d0d0"/><circle cx="2.8" cy="19.6" r="1.700" fill="#d0d0d0"/></svg>
<svg style="left:1126.5px;top:965.6px;" width="23.5" height="19" viewBox="0 0 23.5 19"><rect x="0.800" y="0.800" width="21.900" height="17.300" stroke="#d0d0d0" stroke-width="1.600" fill="none"/><rect x="6.500" y="6.200" width="12" height="7.600" fill="#b4b4b4"/></svg>
<svg style="left:1164.5px;top:959.5px;" width="27" height="31" viewBox="0 0 27 31"><g stroke="#d0d0d0" stroke-width="1.600" fill="none"><rect x="3.200" y="6.200" width="21" height="14"/><path d="M13.600 0.500V21.800M0.500 13.400H4M8 13.400H10.500M16.800 13.400H19.200M23 13.400H26.500"/></g><path d="M17.500 25.300H25L21.200 29.800Z" fill="#d0d0d0"/></svg>
<svg style="left:1230px;top:960px;" width="28" height="30" viewBox="0 0 28 30"><circle cx="11.800" cy="7.800" r="4.800" fill="#ff2a2a"/><circle cx="7.200" cy="16.200" r="4.800" fill="#1fd41f"/><circle cx="17" cy="16.200" r="4.900" fill="#4a6cf7"/><path d="M16 23.800H24.400L20.200 28.400Z" fill="#d0d0d0"/></svg>
<svg style="left:1272px;top:964px;" width="23" height="23" viewBox="0 0 23 23"><circle cx="11.500" cy="11.500" r="10.800" fill="#d4d4d4"/><path d="M14.90 11.50L14.97 21.94" stroke="#1f1f1f" stroke-width="1.500"/><path d="M13.20 14.44L4.19 19.72" stroke="#1f1f1f" stroke-width="1.500"/><path d="M9.80 14.44L0.73 9.28" stroke="#1f1f1f" stroke-width="1.500"/><path d="M8.10 11.50L8.03 1.06" stroke="#1f1f1f" stroke-width="1.500"/><path d="M9.80 8.56L18.81 3.28" stroke="#1f1f1f" stroke-width="1.500"/><path d="M13.20 8.56L22.27 13.72" stroke="#1f1f1f" stroke-width="1.500"/><circle cx="11.500" cy="11.500" r="3" fill="#1f1f1f"/></svg>
<span class="t" id="t33" style="left:1404.60px;top:106.10px;font-size:19px;line-height:19px;color:#e6e6e6;font-weight:400;letter-spacing:-0.341px;">Preview</span>
<div style="left:1488px;top:109.25px;width:14px;height:1.5px;background:#c4c4c4;"></div>
<div style="left:1488px;top:115.25px;width:14px;height:1.5px;background:#c4c4c4;"></div>
<div style="left:1488px;top:121.25px;width:14px;height:1.5px;background:#c4c4c4;"></div>
<svg style="left:1464px;top:150px;" width="22" height="16" viewBox="0 0 22 16"><rect x="0" y="0" width="3" height="16" fill="#b8b8b8"/><path d="M21 0L6 8.0L21 16Z" fill="#b8b8b8"/></svg>
<svg style="left:1502px;top:150px;" width="22" height="16" viewBox="0 0 22 16"><path d="M15 0L0 8.0L15 16Z" fill="#b8b8b8"/><rect x="18.5" y="0" width="3" height="16" fill="#b8b8b8"/></svg>
<svg style="left:1546.5px;top:150px;" width="16" height="16" viewBox="0 0 16 16"><path d="M0 0L16 8.0L0 16Z" fill="#b8b8b8"/></svg>
<svg style="left:1585px;top:150px;" width="22" height="16" viewBox="0 0 22 16"><rect x="0" y="0" width="3" height="16" fill="#b8b8b8"/><path d="M6.5 0L21.5 8.0L6.5 16Z" fill="#b8b8b8"/></svg>
<svg style="left:1626px;top:150px;" width="22" height="16" viewBox="0 0 22 16"><path d="M0 0L15 8.0L0 16Z" fill="#b8b8b8"/><rect x="18" y="0" width="3" height="16" fill="#b8b8b8"/></svg>
<span class="t" id="t34" style="left:1404.40px;top:200.50px;font-size:19px;line-height:19px;color:#e6e6e6;font-weight:400;letter-spacing:-0.116px;">Properties: front</span>
<div style="left:1858.7px;top:203.55px;width:14px;height:1.5px;background:#c4c4c4;"></div>
<div style="left:1858.7px;top:209.55px;width:14px;height:1.5px;background:#c4c4c4;"></div>
<div style="left:1858.7px;top:215.55px;width:14px;height:1.5px;background:#c4c4c4;"></div>
<span class="t" id="t35" style="left:1402.90px;top:237.75px;font-size:18.5px;line-height:18.5px;color:#cdcdcd;font-weight:700;letter-spacing:-0.418px;-webkit-text-stroke:0;">Layer Transform</span>
<span class="t" id="t36" style="left:1640.40px;top:237.50px;font-size:19px;line-height:19px;color:#3b8fe8;font-weight:400;letter-spacing:-0.988px;">Reset</span>
<svg style="left:1424.5px;top:268.8px;" width="19" height="22" viewBox="0 0 19 22"><circle cx="9.5" cy="12.7" r="8.5" stroke="#c4c4c4" stroke-width="2" fill="none"/><path d="M6.3 1H12.7M9.5 1V4M2.2 3.2L4.4 5.4" stroke="#c4c4c4" stroke-width="1.7" fill="none"/></svg>
<span class="t" id="t37" style="left:1483.70px;top:271.50px;font-size:19px;line-height:19px;color:#c4c4c4;font-weight:400;letter-spacing:-0.175px;">Anchor Point</span>
<svg style="left:1424.5px;top:302.3px;" width="19" height="22" viewBox="0 0 19 22"><circle cx="9.5" cy="12.7" r="8.5" stroke="#c4c4c4" stroke-width="2" fill="none"/><path d="M6.3 1H12.7M9.5 1V4M2.2 3.2L4.4 5.4" stroke="#c4c4c4" stroke-width="1.7" fill="none"/></svg>
<span class="t" id="t38" style="left:1483.70px;top:305.00px;font-size:19px;line-height:19px;color:#c4c4c4;font-weight:400;letter-spacing:-0.299px;">Position</span>
<svg style="left:1424.5px;top:336.1px;" width="19" height="22" viewBox="0 0 19 22"><circle cx="9.5" cy="12.7" r="8.5" stroke="#c4c4c4" stroke-width="2" fill="none"/><path d="M6.3 1H12.7M9.5 1V4M2.2 3.2L4.4 5.4" stroke="#c4c4c4" stroke-width="1.7" fill="none"/></svg>
<span class="t" id="t39" style="left:1483.70px;top:338.80px;font-size:19px;line-height:19px;color:#c4c4c4;font-weight:400;letter-spacing:-0.947px;">Scale</span>
<svg style="left:1424.5px;top:369.8px;" width="19" height="22" viewBox="0 0 19 22"><circle cx="9.5" cy="12.7" r="8.5" stroke="#c4c4c4" stroke-width="2" fill="none"/><path d="M6.3 1H12.7M9.5 1V4M2.2 3.2L4.4 5.4" stroke="#c4c4c4" stroke-width="1.7" fill="none"/></svg>
<span class="t" id="t40" style="left:1483.70px;top:372.50px;font-size:19px;line-height:19px;color:#c4c4c4;font-weight:400;letter-spacing:-0.147px;">Rotation</span>
<svg style="left:1424.5px;top:403.8px;" width="19" height="22" viewBox="0 0 19 22"><circle cx="9.5" cy="12.7" r="8.5" stroke="#c4c4c4" stroke-width="2" fill="none"/><path d="M6.3 1H12.7M9.5 1V4M2.2 3.2L4.4 5.4" stroke="#c4c4c4" stroke-width="1.7" fill="none"/></svg>
<span class="t" id="t41" style="left:1483.70px;top:406.50px;font-size:19px;line-height:19px;color:#c4c4c4;font-weight:400;letter-spacing:-0.174px;">Opacity</span>
<span class="t" id="t42" style="left:1640.40px;top:271.80px;font-size:19px;line-height:19px;color:#3b8fe8;font-weight:400;letter-spacing:-0.395px;">1053</span>
<div style="left:1637.7px;top:294px;width:66px;height:1.5px;background:#5a5a5a;"></div>
<span class="t" id="t43" style="left:1725.40px;top:271.80px;font-size:19px;line-height:19px;color:#3b8fe8;font-weight:400;letter-spacing:-0.501px;">497</span>
<div style="left:1722.8px;top:294px;width:66px;height:1.5px;background:#5a5a5a;"></div>
<span class="t" id="t44" style="left:1640.40px;top:305.30px;font-size:19px;line-height:19px;color:#3b8fe8;font-weight:400;letter-spacing:-0.395px;">1053</span>
<div style="left:1637.7px;top:327.5px;width:66px;height:1.5px;background:#5a5a5a;"></div>
<span class="t" id="t45" style="left:1725.40px;top:305.30px;font-size:19px;line-height:19px;color:#3b8fe8;font-weight:400;letter-spacing:-0.501px;">497</span>
<div style="left:1722.8px;top:327.5px;width:66px;height:1.5px;background:#5a5a5a;"></div>
<span class="t" id="t46" style="left:1640.40px;top:339.10px;font-size:19px;line-height:19px;color:#3b8fe8;font-weight:400;letter-spacing:-0.168px;">100</span>
<span class="t" id="t47" style="left:1672.90px;top:339.10px;font-size:19px;line-height:19px;color:#d0d0d0;font-weight:400;letter-spacing:-0.200px;">%</span>
<div style="left:1637.7px;top:361.3px;width:66px;height:1.5px;background:#5a5a5a;"></div>
<span class="t" id="t48" style="left:1725.40px;top:339.10px;font-size:19px;line-height:19px;color:#3b8fe8;font-weight:400;letter-spacing:-0.168px;">100</span>
<span class="t" id="t49" style="left:1757.90px;top:339.10px;font-size:19px;line-height:19px;color:#d0d0d0;font-weight:400;letter-spacing:-0.200px;">%</span>
<div style="left:1722.8px;top:361.3px;width:66px;height:1.5px;background:#5a5a5a;"></div>
<svg style="left:1601.3px;top:339.8px;" width="23" height="13" viewBox="0 0 23 13"><rect x="1.2" y="2.6" width="12" height="7.8" rx="3.9" stroke="#4b95ea" stroke-width="2.5" fill="none"/><rect x="9.8" y="2.6" width="12" height="7.8" rx="3.9" stroke="#4b95ea" stroke-width="2.5" fill="none"/></svg>
<span class="t" id="t50" style="left:1640.40px;top:372.80px;font-size:19px;line-height:19px;color:#3b8fe8;font-weight:400;letter-spacing:-0.372px;">0</span>
<span class="t" id="t51" style="left:1651.40px;top:372.80px;font-size:19px;line-height:19px;color:#d0d0d0;font-weight:400;letter-spacing:-0.309px;">x</span>
<span class="t" id="t52" style="left:1662.40px;top:372.80px;font-size:19px;line-height:19px;color:#3b8fe8;font-weight:400;letter-spacing:0.644px;">+0°</span>
<div style="left:1637.7px;top:395px;width:89.5px;height:1.5px;background:#5a5a5a;"></div>
<span class="t" id="t53" style="left:1640.40px;top:406.80px;font-size:19px;line-height:19px;color:#3b8fe8;font-weight:400;letter-spacing:-0.168px;">100</span>
<span class="t" id="t54" style="left:1672.90px;top:406.80px;font-size:19px;line-height:19px;color:#d0d0d0;font-weight:400;letter-spacing:-0.200px;">%</span>
<div style="left:1637.7px;top:429px;width:66px;height:1.5px;background:#5a5a5a;"></div>
<div style="left:1386.5px;top:457px;width:1503px;height:1.6px;background:#101010;width:503px;"></div>
<span class="t" id="t55" style="left:1404.40px;top:472.50px;font-size:19px;line-height:19px;color:#c4c4c4;font-weight:400;letter-spacing:-0.210px;">Align</span>
<div style="left:1386.5px;top:500px;width:503px;height:3.2px;background:#080808;"></div>
<span class="t" id="t56" style="left:1404.40px;top:515.80px;font-size:19px;line-height:19px;color:#c4c4c4;font-weight:400;letter-spacing:-0.280px;">Audio</span>
<div style="left:1386.5px;top:543.5px;width:503px;height:3.2px;background:#080808;"></div>
<span class="t" id="t57" style="left:1404.40px;top:560.00px;font-size:19px;line-height:19px;color:#e6e6e6;font-weight:400;letter-spacing:-0.511px;">Effects &amp; Presets</span>
<div style="left:1859px;top:563.05px;width:14px;height:1.5px;background:#c4c4c4;"></div>
<div style="left:1859px;top:569.05px;width:14px;height:1.5px;background:#c4c4c4;"></div>
<div style="left:1859px;top:575.05px;width:14px;height:1.5px;background:#c4c4c4;"></div>
<div style="left:1395px;top:594.5px;width:487.5px;height:29.5px;background:#111111;border-radius:6px;box-shadow:0 0 0 1px #2b2b2b;"></div>
<svg style="left:1405.5px;top:599.5px;" width="28" height="20" viewBox="0 0 28 20"><circle cx="7.6" cy="7.6" r="6" stroke="#c4c4c4" stroke-width="1.8" fill="none"/><path d="M12 12L17.5 18.2" stroke="#c4c4c4" stroke-width="2.2" fill="none"/><path d="M17.5 9.8L21.3 13.6L25.3 9.8" stroke="#c4c4c4" stroke-width="1.7" fill="none"/></svg>
<div style="left:1386.5px;top:629.5849999999999px;width:503px;height:2px;background:#151515;"></div>
<svg style="left:1394.3px;top:637.15px;" width="9.5" height="15.5" viewBox="0 0 9.5 15.5"><path d="M1.6 1.6L7.5 7.75L1.6 13.9" stroke="#bdbdbd" stroke-width="3" fill="none" stroke-linejoin="miter"/></svg>
<span class="t" id="t58" style="left:1411.40px;top:634.80px;font-size:19px;line-height:19px;color:#c4c4c4;font-weight:400;letter-spacing:-0.190px;">* Animation Presets</span>
<div style="left:1386.5px;top:658.2149999999999px;width:503px;height:2px;background:#151515;"></div>
<svg style="left:1394.3px;top:665.78px;" width="9.5" height="15.5" viewBox="0 0 9.5 15.5"><path d="M1.6 1.6L7.5 7.75L1.6 13.9" stroke="#bdbdbd" stroke-width="3" fill="none" stroke-linejoin="miter"/></svg>
<span class="t" id="t59" style="left:1411.40px;top:663.43px;font-size:19px;line-height:19px;color:#c4c4c4;font-weight:400;letter-spacing:-0.516px;">3D Channel</span>
<div style="left:1386.5px;top:686.8449999999999px;width:503px;height:2px;background:#151515;"></div>
<svg style="left:1394.3px;top:694.41px;" width="9.5" height="15.5" viewBox="0 0 9.5 15.5"><path d="M1.6 1.6L7.5 7.75L1.6 13.9" stroke="#bdbdbd" stroke-width="3" fill="none" stroke-linejoin="miter"/></svg>
<span class="t" id="t60" style="left:1411.40px;top:692.06px;font-size:19px;line-height:19px;color:#c4c4c4;font-weight:400;letter-spacing:-0.280px;">Audio</span>
<div style="left:1386.5px;top:715.4749999999999px;width:503px;height:2px;background:#151515;"></div>
<svg style="left:1394.3px;top:723.04px;" width="9.5" height="15.5" viewBox="0 0 9.5 15.5"><path d="M1.6 1.6L7.5 7.75L1.6 13.9" stroke="#bdbdbd" stroke-width="3" fill="none" stroke-linejoin="miter"/></svg>
<span class="t" id="t61" style="left:1411.40px;top:720.69px;font-size:19px;line-height:19px;color:#c4c4c4;font-weight:400;letter-spacing:-0.368px;">Blur &amp; Sharpen</span>
<div style="left:1386.5px;top:744.1049999999999px;width:503px;height:2px;background:#151515;"></div>
<svg style="left:1394.3px;top:751.67px;" width="9.5" height="15.5" viewBox="0 0 9.5 15.5"><path d="M1.6 1.6L7.5 7.75L1.6 13.9" stroke="#bdbdbd" stroke-width="3" fill="none" stroke-linejoin="miter"/></svg>
<span class="t" id="t62" style="left:1411.40px;top:749.32px;font-size:19px;line-height:19px;color:#c4c4c4;font-weight:400;letter-spacing:-0.568px;">Boris FX Mocha</span>
<div style="left:1386.5px;top:772.7349999999999px;width:503px;height:2px;background:#151515;"></div>
<svg style="left:1394.3px;top:780.3px;" width="9.5" height="15.5" viewBox="0 0 9.5 15.5"><path d="M1.6 1.6L7.5 7.75L1.6 13.9" stroke="#bdbdbd" stroke-width="3" fill="none" stroke-linejoin="miter"/></svg>
<span class="t" id="t63" style="left:1411.40px;top:777.95px;font-size:19px;line-height:19px;color:#c4c4c4;font-weight:400;letter-spacing:-0.511px;">Channel</span>
<div style="left:1386.5px;top:801.3649999999999px;width:503px;height:2px;background:#151515;"></div>
<svg style="left:1394.3px;top:808.93px;" width="9.5" height="15.5" viewBox="0 0 9.5 15.5"><path d="M1.6 1.6L7.5 7.75L1.6 13.9" stroke="#bdbdbd" stroke-width="3" fill="none" stroke-linejoin="miter"/></svg>
<span class="t" id="t64" style="left:1411.40px;top:806.58px;font-size:19px;line-height:19px;color:#c4c4c4;font-weight:400;letter-spacing:-0.539px;">Cinema 4D</span>
<div style="left:1386.5px;top:829.9949999999999px;width:503px;height:2px;background:#151515;"></div>
<svg style="left:1394.3px;top:837.56px;" width="9.5" height="15.5" viewBox="0 0 9.5 15.5"><path d="M1.6 1.6L7.5 7.75L1.6 13.9" stroke="#bdbdbd" stroke-width="3" fill="none" stroke-linejoin="miter"/></svg>
<span class="t" id="t65" style="left:1411.40px;top:835.21px;font-size:19px;line-height:19px;color:#c4c4c4;font-weight:400;letter-spacing:-0.290px;">Color Correction</span>
<div style="left:1386.5px;top:858.6249999999999px;width:503px;height:2px;background:#151515;"></div>
<svg style="left:1394.3px;top:866.1899999999999px;" width="9.5" height="15.5" viewBox="0 0 9.5 15.5"><path d="M1.6 1.6L7.5 7.75L1.6 13.9" stroke="#bdbdbd" stroke-width="3" fill="none" stroke-linejoin="miter"/></svg>
<span class="t" id="t66" style="left:1411.40px;top:863.84px;font-size:19px;line-height:19px;color:#c4c4c4;font-weight:400;letter-spacing:0.085px;">Distort</span>
<div style="left:1386.5px;top:887.255px;width:503px;height:2px;background:#151515;"></div>
<svg style="left:1394.3px;top:894.82px;" width="9.5" height="15.5" viewBox="0 0 9.5 15.5"><path d="M1.6 1.6L7.5 7.75L1.6 13.9" stroke="#bdbdbd" stroke-width="3" fill="none" stroke-linejoin="miter"/></svg>
<span class="t" id="t67" style="left:1411.40px;top:892.47px;font-size:19px;line-height:19px;color:#c4c4c4;font-weight:400;letter-spacing:-0.412px;">Expression Controls</span>
<div style="left:1386.5px;top:915.8849999999999px;width:503px;height:2px;background:#151515;"></div>
<svg style="left:1394.3px;top:923.4499999999999px;" width="9.5" height="15.5" viewBox="0 0 9.5 15.5"><path d="M1.6 1.6L7.5 7.75L1.6 13.9" stroke="#bdbdbd" stroke-width="3" fill="none" stroke-linejoin="miter"/></svg>
<span class="t" id="t68" style="left:1411.40px;top:921.10px;font-size:19px;line-height:19px;color:#c4c4c4;font-weight:400;letter-spacing:-0.565px;">Generate</span>
<div style="left:1386.5px;top:944.515px;width:503px;height:2px;background:#151515;"></div>
<svg style="left:1394.3px;top:952.08px;" width="9.5" height="15.5" viewBox="0 0 9.5 15.5"><path d="M1.6 1.6L7.5 7.75L1.6 13.9" stroke="#bdbdbd" stroke-width="3" fill="none" stroke-linejoin="miter"/></svg>
<span class="t" id="t69" style="left:1411.40px;top:949.73px;font-size:19px;line-height:19px;color:#c4c4c4;font-weight:400;letter-spacing:-0.171px;">Immersive Video</span>
<div style="left:1386.5px;top:973.1449999999999px;width:503px;height:2px;background:#151515;"></div>
<svg style="left:1394.3px;top:980.7099999999999px;" width="9.5" height="15.5" viewBox="0 0 9.5 15.5"><path d="M1.6 1.6L7.5 7.75L1.6 13.9" stroke="#bdbdbd" stroke-width="3" fill="none" stroke-linejoin="miter"/></svg>
<span class="t" id="t70" style="left:1411.40px;top:978.36px;font-size:19px;line-height:19px;color:#c4c4c4;font-weight:400;letter-spacing:-0.435px;">Keying</span>
<div style="left:1386.5px;top:1001.775px;width:503px;height:2px;background:#151515;"></div>
<svg style="left:1394.3px;top:1009.34px;" width="9.5" height="15.5" viewBox="0 0 9.5 15.5"><path d="M1.6 1.6L7.5 7.75L1.6 13.9" stroke="#bdbdbd" stroke-width="3" fill="none" stroke-linejoin="miter"/></svg>
<span class="t" id="t71" style="left:1411.40px;top:1006.99px;font-size:19px;line-height:19px;color:#c4c4c4;font-weight:400;letter-spacing:-0.066px;">Matte</span>
<div style="left:1386.5px;top:1030.4049999999997px;width:503px;height:2px;background:#151515;"></div>
<svg style="left:1394.3px;top:1037.9699999999998px;" width="9.5" height="15.5" viewBox="0 0 9.5 15.5"><path d="M1.6 1.6L7.5 7.75L1.6 13.9" stroke="#bdbdbd" stroke-width="3" fill="none" stroke-linejoin="miter"/></svg>
<span class="t" id="t72" style="left:1411.40px;top:1035.62px;font-size:19px;line-height:19px;color:#c4c4c4;font-weight:400;letter-spacing:-0.391px;">Noise &amp; Grain</span>
<div style="left:1386.5px;top:1059.0349999999999px;width:503px;height:2px;background:#151515;"></div>
<svg style="left:1394.3px;top:1066.6px;" width="9.5" height="15.5" viewBox="0 0 9.5 15.5"><path d="M1.6 1.6L7.5 7.75L1.6 13.9" stroke="#bdbdbd" stroke-width="3" fill="none" stroke-linejoin="miter"/></svg>
<span class="t" id="t73" style="left:1411.40px;top:1064.25px;font-size:19px;line-height:19px;color:#c4c4c4;font-weight:400;letter-spacing:-0.356px;">Obsolete</span>
<div style="left:45.7px;top:1012px;width:17px;height:16.5px;background:#b5a07d;"></div>
<span class="t" id="t74" style="left:80.40px;top:1013.50px;font-size:19px;line-height:19px;color:#c4c4c4;font-weight:400;letter-spacing:-0.555px;">Comp 1</span>
<svg style="left:215px;top:1019.5px;" width="9" height="9" viewBox="0 0 9 9"><path d="M0.5 0.5L8.5 8.5M8.5 0.5L0.5 8.5" stroke="#c4c4c4" stroke-width="1.6" fill="none"/></svg>
<div style="left:240px;top:1012px;width:17px;height:16.5px;background:#b5a07d;"></div>
<span class="t" id="t75" style="left:274.40px;top:1013.10px;font-size:19px;line-height:19px;color:#e6e6e6;font-weight:400;letter-spacing:-0.318px;">shatterEffect</span>
<div style="left:394.5px;top:1016.55px;width:14px;height:1.5px;background:#c4c4c4;"></div>
<div style="left:394.5px;top:1022.55px;width:14px;height:1.5px;background:#c4c4c4;"></div>
<div style="left:394.5px;top:1028.55px;width:14px;height:1.5px;background:#c4c4c4;"></div>
<div style="left:215px;top:1039.6px;width:194px;height:2px;background:#d8d8d8;"></div>
<span class="t" id="t76" style="left:23.10px;top:1049.80px;font-size:25px;line-height:25px;color:#3b8fe8;font-weight:700;letter-spacing:-0.111px;">0;00;00;07</span>
<div style="left:170px;top:1055.5px;width:504.5px;height:40px;background:#111111;border-radius:6px;box-shadow:0 0 0 1px #2b2b2b;"></div>
<svg style="left:181px;top:1062px;" width="28" height="20" viewBox="0 0 28 20"><circle cx="7.6" cy="7.6" r="6" stroke="#c4c4c4" stroke-width="1.8" fill="none"/><path d="M12 12L17.5 18.2" stroke="#c4c4c4" stroke-width="2.2" fill="none"/><path d="M17.5 9.8L21.3 13.6L25.3 9.8" stroke="#c4c4c4" stroke-width="1.7" fill="none"/></svg>
<div style="left:917px;top:1052.3px;width:420px;height:14.2px;background:#707070;box-shadow:inset 0 0 0 1px #3a3a3a;"></div>
<div style="left:908px;top:1052.5px;width:10.5px;height:14px;background:#1e90ff;border-radius:7px 2px 2px 7px;"></div>
<div style="left:1335.5px;top:1052.5px;width:13px;height:14px;background:#1e90ff;border-radius:2px 7px 7px 2px;"></div>
<div style="left:921px;top:1053.3px;width:5px;height:12.4px;background:#7d9cbb;"></div>
<span class="t" id="t77" style="left:1103.00px;top:1072.75px;font-size:18.5px;line-height:18.5px;color:#bdbdbd;font-weight:400;letter-spacing:-1.224px;">00:15s</span>
<span class="t" id="t78" style="left:1310.80px;top:1072.75px;font-size:18.5px;line-height:18.5px;color:#bdbdbd;font-weight:400;letter-spacing:-1.224px;clip-path:inset(0 10px 0 0);">00:30s</span>
<svg style="left:695.5px;top:1063px;" width="27" height="18" viewBox="0 0 27 18"><g fill="#c6c6c6"><rect x="0.500" y="1.200" width="11" height="5.800" rx="2"/><rect x="18.500" y="0.500" width="8" height="6.800"/><rect x="18.500" y="10.200" width="8" height="7"/></g><path d="M11 4H19M14.800 4V13.500H19" stroke="#c6c6c6" stroke-width="1.700" fill="none"/><rect x="3" y="3" width="5" height="2" fill="#1f1f1f"/></svg>
<svg style="left:738px;top:1060px;" width="24" height="21" viewBox="0 0 24 21"><path d="M1 12.500A11 11 0 0 1 23 12.500Z" fill="#c6c6c6"/><circle cx="8.400" cy="7.500" r="2" fill="#1f1f1f"/><circle cx="15.600" cy="7.500" r="2" fill="#1f1f1f"/><rect x="10" y="9" width="4" height="12" fill="#c6c6c6"/><rect x="0" y="14" width="24" height="7" fill="#4a4a4a"/><rect x="10" y="13" width="4" height="8" fill="#c6c6c6"/></svg>
<svg style="left:778.5px;top:1061px;" width="24" height="20" viewBox="0 0 24 20"><rect x="0" y="5.500" width="5" height="14.500" fill="#c6c6c6"/><rect x="6.800" y="0.500" width="17" height="19.500" fill="#c6c6c6"/><rect x="8.300" y="2.0" width="1.800" height="2.200" fill="#1f1f1f"/><rect x="20.400" y="2.0" width="1.800" height="2.200" fill="#1f1f1f"/><rect x="8.300" y="6.2" width="1.800" height="2.200" fill="#1f1f1f"/><rect x="20.400" y="6.2" width="1.800" height="2.200" fill="#1f1f1f"/><rect x="8.300" y="10.4" width="1.800" height="2.200" fill="#1f1f1f"/><rect x="20.400" y="10.4" width="1.800" height="2.200" fill="#1f1f1f"/><rect x="8.300" y="14.6" width="1.800" height="2.200" fill="#1f1f1f"/><rect x="20.400" y="14.6" width="1.800" height="2.200" fill="#1f1f1f"/><rect x="8.300" y="18.8" width="1.800" height="2.200" fill="#1f1f1f"/><rect x="20.400" y="18.8" width="1.800" height="2.200" fill="#1f1f1f"/><rect x="11.800" y="8.500" width="7" height="1.800" fill="#1f1f1f"/></svg>
<svg style="left:819px;top:1060.5px;" width="25" height="22" viewBox="0 0 25 22"><g stroke="#c6c6c6" stroke-width="1.700"><circle cx="9.500" cy="14.500" r="8.300" fill="#1f1f1f"/><circle cx="12.500" cy="11.800" r="8.300" fill="#1f1f1f"/><circle cx="15.800" cy="9" r="8.300" fill="#484848"/></g></svg>
<svg style="left:858.5px;top:1058.5px;" width="27" height="23" viewBox="0 0 27 23"><g stroke="#c6c6c6" stroke-width="1.700" fill="none"><rect x="1" y="5" width="24.500" height="20"/><path d="M8 5V1M13.500 5V2.500M19 5V1M1 11H-1M1 17H-1"/><path d="M4.500 9.500C12 9.500 11.500 21.500 20 21.500"/></g></svg>
<span class="t" id="t79" style="left:906.40px;top:1072.75px;font-size:18.5px;line-height:18.5px;color:#bdbdbd;font-weight:400;letter-spacing:0.808px;">:00s</span>
<div style="left:916.5px;top:1074px;width:17px;height:8px;background:#2f8ff0;border-radius:3px 3px 0 0;"></div>
</div></body></html>
